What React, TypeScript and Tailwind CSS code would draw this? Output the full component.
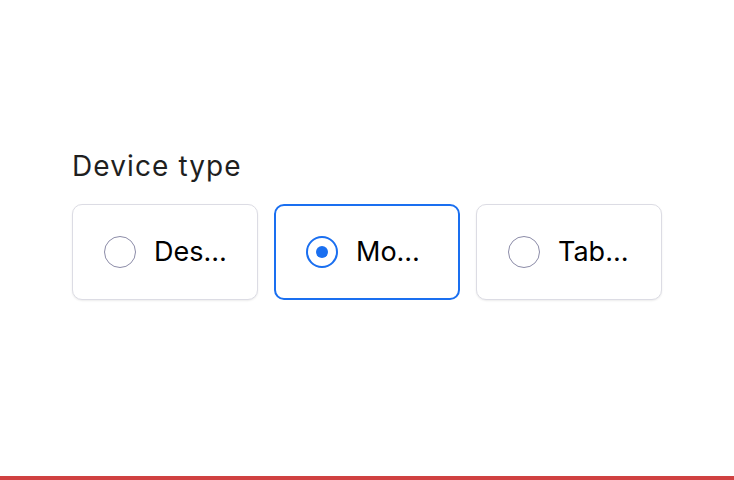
import React from "react";

const options = [
  { label: "Desktop", selected: false },
  { label: "Mobile", selected: true },
  { label: "Tablet", selected: false },
];

export default function App() {
  return (
    <div
      className="w-[734px] h-[480px] bg-white flex flex-col"
      style={{ fontFamily: "Inter, 'Noto Sans', sans-serif" }}
    >
      <div className="flex-1 pl-[72px] pt-[148px]">
        <div className="text-[28px] leading-[36px] text-[#1f1f1f] tracking-[1.1px]">Device type</div>
        <div className="mt-[20px] flex gap-[16px]">
          {options.map((o) => (
            <div
              key={o.label}
              className={
                o.selected
                  ? "w-[186px] h-[96px] rounded-[10px] border-2 border-[#1a6ff0] bg-white flex items-center pl-[30px] pr-[26px]"
                  : "w-[186px] h-[96px] rounded-[10px] border border-[#dcdce4] bg-white shadow-[0_1px_2px_rgba(0,0,0,0.08)] flex items-center pl-[31px] pr-[27px]"
              }
            >
              {o.selected ? (
                <div className="w-[32px] h-[32px] shrink-0 rounded-full border-2 border-[#1a6ff0] flex items-center justify-center">
                  <div className="w-[12px] h-[12px] rounded-full bg-[#1a6ff0]" />
                </div>
              ) : (
                <div className="w-[32px] h-[32px] shrink-0 rounded-full border border-[#8c8ca8]" />
              )}
              <div className="ml-[18px] min-w-0 truncate text-[27px] leading-[36px] text-black">
                {o.label}
              </div>
            </div>
          ))}
        </div>
      </div>
      <div className="h-[4px] bg-[#d04141]" />
    </div>
  );
}
